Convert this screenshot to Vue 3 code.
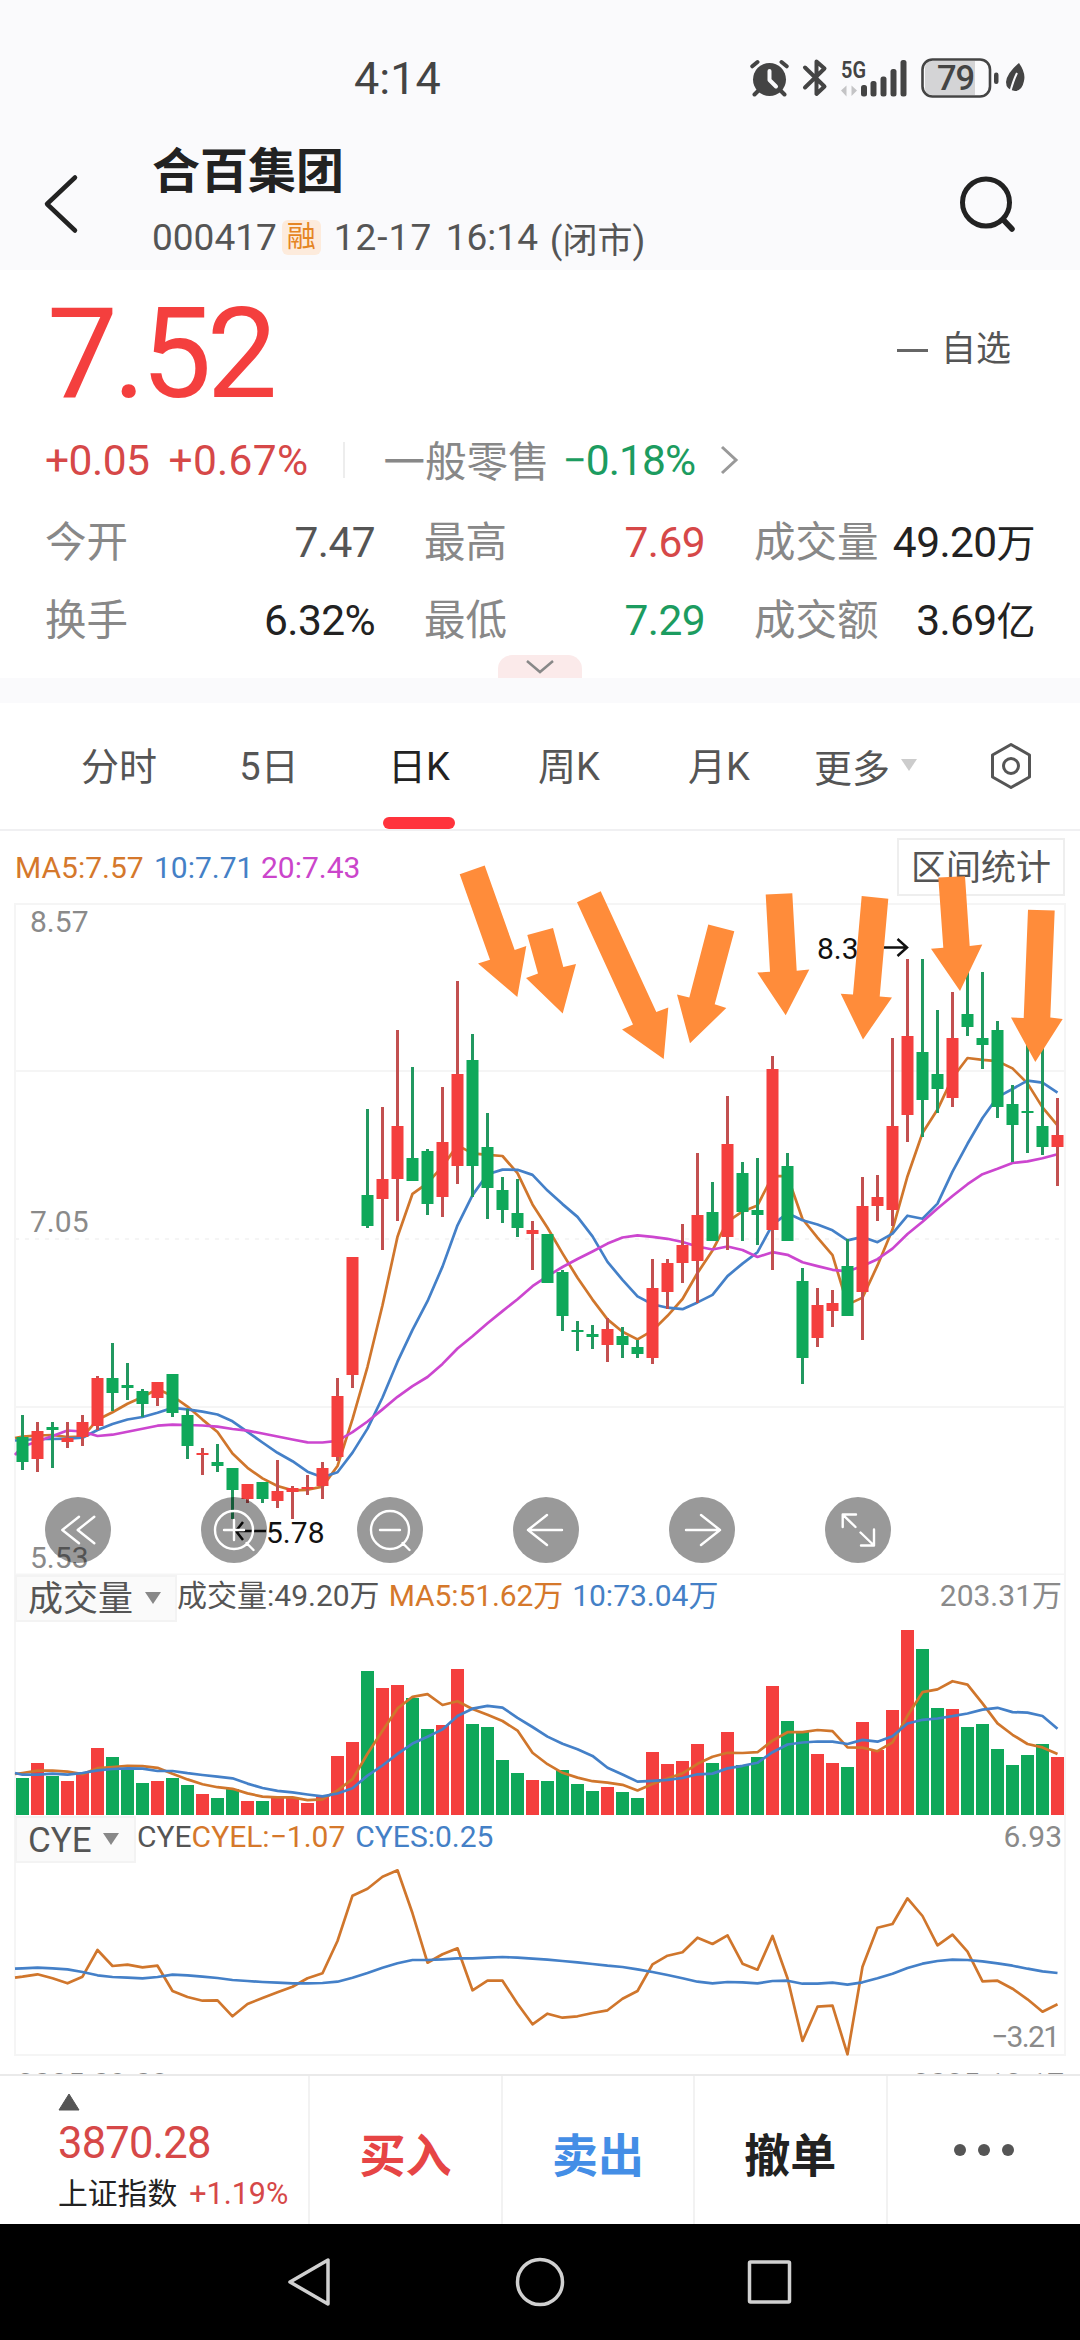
<script setup>
const stats = [
  [['今开', '7.47', 'dim'], ['最高', '7.69', 'up'], ['成交量', '49.20', '', '万']],
  [['换手', '6.32%', ''], ['最低', '7.29', 'down'], ['成交额', '3.69', '', '亿']],
]
const tabs = ['分时', '5日', '日K', '周K', '月K']

// direction, high, body top, body bottom, low, volume top
const candles = `G 1415 1437 1462 1470 1778
R 1422 1431 1459 1472 1763
G 1422 1427 1430 1468 1776
R 1422 1438 1442 1448 1781
R 1415 1422 1437 1446 1773
R 1376 1378 1426 1430 1748
G 1343 1378 1393 1411 1757
G 1363 1385 1388 1400 1770
G 1389 1391 1404 1417 1783
R 1382 1382 1398 1406 1781
G 1374 1374 1413 1417 1778
G 1409 1415 1446 1459 1785
R 1448 1453 1455 1475 1794
G 1444 1462 1466 1472 1798
G 1468 1468 1490 1519 1789
R 1484 1484 1499 1503 1801
G 1482 1482 1499 1503 1801
R 1460 1491 1501 1508 1798
R 1486 1488 1492 1519 1798
R 1475 1487 1489 1495 1803
R 1462 1468 1486 1499 1797
R 1378 1396 1457 1461 1756
R 1257 1257 1375 1388 1742
G 1109 1195 1226 1228 1671
R 1107 1179 1199 1250 1688
R 1030 1126 1179 1221 1685
G 1067 1158 1181 1181 1698
G 1149 1151 1204 1215 1729
R 1087 1142 1197 1217 1725
R 981 1074 1166 1184 1669
G 1034 1060 1166 1197 1724
G 1113 1147 1188 1219 1727
G 1177 1190 1210 1223 1760
G 1179 1213 1228 1237 1773
R 1221 1230 1234 1270 1780
G 1234 1234 1283 1283 1781
G 1270 1272 1316 1331 1770
G 1321 1330 1332 1351 1784
G 1325 1334 1337 1349 1791
R 1318 1329 1345 1362 1787
G 1327 1336 1345 1358 1792
G 1340 1347 1354 1358 1798
R 1259 1288 1358 1364 1752
R 1259 1263 1292 1309 1764
R 1224 1245 1263 1283 1761
R 1153 1215 1261 1303 1744
G 1182 1212 1241 1241 1763
R 1096 1144 1237 1250 1732
G 1162 1173 1212 1241 1765
G 1158 1210 1215 1245 1757
R 1056 1069 1230 1270 1686
G 1153 1166 1241 1241 1721
G 1268 1281 1358 1384 1732
R 1288 1305 1338 1347 1754
R 1290 1303 1311 1327 1763
G 1239 1266 1316 1316 1767
R 1177 1206 1292 1340 1722
R 1175 1197 1206 1221 1750
R 1038 1126 1210 1226 1710
R 959 1036 1115 1142 1630
G 959 1052 1100 1137 1649
G 1010 1074 1089 1113 1708
R 992 1038 1098 1107 1709
G 956 1014 1027 1036 1727
G 972 1038 1045 1069 1724
G 1021 1030 1107 1118 1749
G 1085 1104 1125 1162 1765
G 1043 1111 1113 1153 1755
G 1043 1126 1147 1155 1744
R 1098 1135 1147 1186 1757`.split('\n').map((row, i) => {
  const [dir, ...n] = row.split(' ')
  const [high, top, bottom, low, vol] = n.map(Number)
  return { x: 22.5 + i * 15, kind: dir === 'R' ? 'rise' : 'fall', high, top, bottom, low, vol, close: dir === 'R' ? top : bottom }
})

const closes = candles.map((c) => c.close)
const volumes = candles.map((c) => c.vol)

// First value sits on the left frame, the rest on candle centres
const toPoints = ([first, ...rest]) =>
  [`15,${first}`, ...rest.map((y, i) => `${22.5 + i * 15},${y.toFixed(1)}`)].join(' ')
const average = (values, span, lead) => {
  const tail = []
  for (let i = lead.length - 1; i < values.length; i++) {
    tail.push(values.slice(i - span + 1, i + 1).reduce((a, b) => a + b, 0) / span)
  }
  return toPoints([...lead, ...tail])
}

const ma5 = average(closes, 5, [1438, 1436.7, 1435.5, 1435, 1437])
const ma10 = average(closes, 10, [1440.5, 1440, 1439, 1439, 1438.7, 1437.7, 1430, 1424, 1419.5, 1417])
const ma20 = average(closes, 20, [1455, 1446.5, 1441.5, 1436, 1430.5, 1431.5, 1436, 1434.7, 1431.7, 1428.7, 1425.7, 1424.7, 1425, 1425.5, 1426.7, 1429, 1430.7, 1433.5, 1436.5, 1439.5])
const vol5 = average(volumes, 5, [1774, 1773, 1770.7, 1770.7, 1771.7])
const vol10 = average(volumes, 10, [1773, 1774.7, 1774.7, 1773.7, 1774.7, 1773, 1770.3, 1769, 1768.3, 1768.7])

const scaled = (list) => toPoints(list.map((v) => 1810 + v / 3))
const cyel = scaled([503, 500, 493, 505, 520, 500, 420, 468, 464, 472, 467, 543, 561, 572, 571, 619, 582, 564, 547, 530, 505, 490, 393, 257, 236, 200, 181, 310, 458, 433, 415, 541, 512, 512, 581, 643, 611, 623, 619, 609, 601, 566, 543, 463, 437, 427, 383, 402, 376, 461, 479, 378, 505, 693, 590, 587, 733, 470, 353, 342, 265, 318, 406, 374, 425, 514, 512, 536, 568, 605, 583])
const cyes = scaled([476, 475, 473, 475, 478, 486, 496, 501, 503, 505, 501, 494, 496, 500, 504, 510, 513, 516, 518, 520, 520, 519, 515, 503, 489, 473, 460, 450, 450, 448, 445, 445, 443, 441, 443, 446, 449, 453, 457, 462, 467, 471, 478, 486, 495, 505, 515, 520, 516, 517, 520, 513, 512, 521, 521, 518, 524, 517, 505, 491, 474, 461, 453, 449, 450, 454, 460, 467, 476, 484, 489])

const arrows = [
  '459.7,874.3 484.7,865.6 514.7,950 526.3,946 517.3,997 478,963.4 490,959.7',
  '527.3,935 553,928 563.3,967 576,963.9 562.7,1013.5 526,978 538,973.5',
  '577,902.3 600.7,891.3 656.3,1012 668.3,1007.5 663.7,1059 622,1029.5 633,1024.5',
  '708.3,924.4 734.3,931.3 714.7,1004.3 726.3,1008 690,1043.3 677,994.6 689.3,997.4',
  '765.7,894.5 792.3,893.2 796.7,970.8 809.3,969.4 785.7,1015.3 757.3,972.6 770,971.7',
  '861.7,896 888.3,898.7 879.7,996.5 892,997.4 863,1039.6 840.7,993.7 853,994.6',
  '938.3,877.5 965,876.2 969.7,946 982.3,944.6 960,991 931,948.7 943.3,947.8',
  '1028,909.7 1054.7,910.6 1050.3,1017.6 1062.7,1019 1035.3,1062 1011,1017.6 1023.7,1018',
]

const tools = [
  'M1-13.3-15.7 0 1 13.3M16.3-13.3-.3 0 16.3 13.3',
  'M-19 0a19 19 0 1 0 38 0a19 19 0 1 0-38 0M-10 0H10M0-10V10M12.5 13l7 7',
  'M-19 0a19 19 0 1 0 38 0a19 19 0 1 0-38 0M-10 0H10M12.5 13l7 7',
  'M16 0H-18M1-15-18 0 1 15',
  'M-16 0H18M-1-15 18 0-1 15',
  'M-15.3-3V-15.5H-2M-15-15.2-2.5-3M16-.5V15.5H3M15.5 15 2.5 2.5',
]
</script>

<template>
  <div class="screen">
    <div class="status">
      <span class="clock">4:14</span>
      <svg class="status-icons" width="290" height="50" viewBox="745 54 290 50">
        <g fill="#444">
          <circle cx="769.5" cy="79.500" r="16.500" />
          <path d="M758 91l-3.500 3.500M781 91l3.500 3.500M752.300 66.300 757.500 62M781.500 62l5.200 4.300" stroke="#444" stroke-width="4" stroke-linecap="round" fill="none" />
          <path d="M769.500 71v9l6.500 6.500" stroke="#fafafc" stroke-width="4" fill="none" stroke-linecap="round" stroke-linejoin="round" />
          <path d="M805 67.500l19.500 19-8 7.500V61.500l8 7-19.500 19" fill="none" stroke="#444" stroke-width="4" stroke-linejoin="round" stroke-linecap="round" />
          <rect x="861" y="85" width="6" height="11.500" rx="2.500" />
          <rect x="870.500" y="81" width="6" height="15.500" rx="2.500" />
          <rect x="880.500" y="76.500" width="6" height="20" rx="2.500" />
          <rect x="890.500" y="69" width="6" height="27.500" rx="2.500" />
          <rect x="900.500" y="60" width="6" height="36.500" rx="2.500" />
          <text x="841" y="77.500" font-size="24" font-weight="600" textLength="25" lengthAdjust="spacingAndGlyphs">5G</text>
          <path d="M841 90.500l5.500-5v11zM857 90.500l-5.500 5.500V85.500z" fill="#c4c4c6" />
          <path d="M932 61h43v34h-43q-7 0-7-7V68q0-7 7-7z" fill="#d4d4d6" />
          <rect x="922.500" y="59.500" width="67.500" height="37" rx="10" fill="none" stroke="#444" stroke-width="2.600" />
          <rect x="994" y="72.500" width="4.500" height="11.500" rx="2.200" />
          <text x="937" y="90" font-size="34.500" font-weight="500" textLength="38">79</text>
          <path d="M1019 63q7 10 5 18-2 10-9 10-9-1-9-9 1-9 13-19z" />
          <path d="M1017 73q-4 8-7 20" stroke="#fafafc" stroke-width="2" fill="none" />
        </g>
      </svg>
    </div>

    <header class="header">
      <svg class="back" width="40" height="70" viewBox="40 169 40 70"><path d="M75 177.500 47 204 75 230.500" fill="none" stroke="#222" stroke-width="4.500" stroke-linecap="round" stroke-linejoin="round" /></svg>
      <div class="title">
        <h1>合百集团</h1>
        <div class="sub">
          <span>000417</span><b class="badge">融</b><span class="date">12-17</span><span class="time">16:14</span><span class="closed">(<i>闭市</i>)</span>
        </div>
      </div>
      <svg class="search" width="60" height="60" viewBox="957 173 60 60"><circle cx="986" cy="202.500" r="23.500" fill="none" stroke="#222" stroke-width="5" /><path d="M1003.500 220l8.500 9" stroke="#222" stroke-width="5.500" stroke-linecap="round" /></svg>
    </header>

    <section class="quote">
      <div class="price-row">
        <span class="price">7.52</span>
        <span class="watch"><i class="dash"></i>自选</span>
      </div>
      <div class="change-row">
        <span class="up">+0.05</span><span class="up pct">+0.67%</span><i class="bar"></i>
        <span class="sector">一般零售</span><span class="down">−0.18%</span>
        <svg width="20" height="30" viewBox="0 0 20 30"><path d="M3 2 17 15 3 28" fill="none" stroke="#999" stroke-width="3" /></svg>
      </div>
      <div v-for="(row, r) in stats" :key="r" class="stat-row">
        <div v-for="s in row" :key="s[0]" class="stat">
          <span class="label">{{ s[0] }}</span><span class="value" :class="s[2]">{{ s[1] }}<i v-if="s[3]">{{ s[3] }}</i></span>
        </div>
      </div>
      <div class="expand"><svg width="30" height="16" viewBox="0 0 30 16"><path d="M2 2 15 13 28 2" fill="none" stroke="#888" stroke-width="2.500" /></svg></div>
    </section>

    <nav class="tabs">
      <span v-for="t in tabs" :key="t" class="tab" :class="{ active: t === '日K' }">{{ t }}</span>
      <span class="more">更多<i class="tri light"></i></span>
      <svg width="44" height="48" viewBox="-22 -24 44 48" fill="none" stroke="#555" stroke-width="3"><path d="M0-21.500 18.500-11V11L0 21.500-18.500 11V-11z" stroke-linejoin="round" /><circle r="7.500" /></svg>
    </nav>

    <section class="chart">
      <div class="legend-row">
        <span class="c-orange first">MA5:7.57</span><span class="c-blue second">10:7.71</span><span class="c-pink">20:7.43</span>
        <span class="range">区间统计</span>
      </div>

      <div class="pane kline">
        <svg width="1080" height="672" viewBox="0 903 1080 672">
          <g class="grid">
            <path d="M15 904H1065M15 1071H1065M15 1407H1065M15 1574.500H1065M15 903V1575M1065 903V1575" />
            <path d="M15 1239H1065" stroke-dasharray="4 6" />
          </g>
          <polyline class="l-orange" :points="ma5" />
          <polyline class="l-blue" :points="ma10" />
          <polyline class="l-pink" :points="ma20" />
          <g v-for="c in candles" :key="c.x" :class="c.kind">
            <rect class="wick" :x="c.x - 1.5" :y="c.high" width="3" :height="c.low - c.high" />
            <rect :x="c.x - 6" :y="c.top" width="12" :height="c.bottom - c.top" />
          </g>
          <g class="axis"><text x="30" y="932">8.57</text><text x="30" y="1232">7.05</text><text x="30" y="1568">5.53</text></g>
          <g class="mark">
            <text x="817" y="958.500">8.37</text><text x="266" y="1543">5.78</text>
            <path d="M878 947.500H907M897.500 939 907 947.500 897.500 956" />
            <path d="M266 1531H237M243 1522 236 1531 243 1540" stroke-width="3.500" />
          </g>
        </svg>
        <div class="tools">
          <span v-for="(d, i) in tools" :key="i" class="tool"><svg width="66" height="66" viewBox="-33 -33 66 66"><path :d="d" /></svg></span>
        </div>
      </div>

      <div class="pane volume">
        <svg width="1080" height="241" viewBox="0 1575 1080 241">
          <g class="grid"><path d="M15 1575V1816M1065 1575V1816" /></g>
          <g v-for="c in candles" :key="c.x" :class="c.kind"><rect :x="c.x - 6.5" :y="c.vol" width="13" :height="1815 - c.vol" /></g>
          <polyline class="l-orange" :points="vol5" />
          <polyline class="l-blue" :points="vol10" />
        </svg>
        <div class="pane-head">
          <span class="tag vol-tag">成交量<i class="tri"></i></span>
          <span class="c-gray vl">成交量:49.20万</span><span class="c-orange">MA5:51.62万</span><span class="c-blue">10:73.04万</span>
          <span class="max">203.31万</span>
        </div>
      </div>

      <div class="pane cye">
        <svg width="1080" height="241" viewBox="0 1816 1080 241">
          <g class="grid"><path d="M15 1816V2055H1065V1816" /></g>
          <polyline class="l-orange" :points="cyel" />
          <polyline class="l-blue" :points="cyes" />
          <g class="axis"><text x="1060" y="2047" text-anchor="end" textLength="69">−3.21</text></g>
        </svg>
        <div class="pane-head">
          <span class="tag cye-tag">CYE<i class="tri"></i></span>
          <span class="c-gray">CYE</span><span class="c-orange cl">CYEL:−1.07</span><span class="c-blue">CYES:0.25</span>
          <span class="max">6.93</span>
        </div>
      </div>

      <div class="dates"><span>2025-09-03</span><span>2025-12-17</span></div>

      <svg class="arrows" width="1080" height="244" viewBox="0 831 1080 244"><polygon v-for="a in arrows" :key="a" :points="a" fill="#ff8c3a" /></svg>
    </section>

    <footer class="footer">
      <div class="index">
        <svg width="22" height="18" viewBox="0 0 22 18"><path d="M11 1 21 17H1z" fill="#555" stroke="#555" stroke-linejoin="round" /></svg>
        <span class="points">3870.28</span>
        <span class="index-name">上证指数<em>+1.19%</em></span>
      </div>
      <div class="act buy">买入</div>
      <div class="act sell">卖出</div>
      <div class="act">撤单</div>
      <div class="act dots"><i></i><i></i><i></i></div>
    </footer>

    <div class="sysnav">
      <svg width="1080" height="116" viewBox="0 2224 1080 116" fill="none" stroke="#d0d0d0" stroke-width="3.500" stroke-linejoin="round">
        <path d="M328 2260V2304L290 2282z" /><circle cx="540" cy="2282" r="22.500" /><rect x="749.500" y="2262" width="40" height="40" rx="1" />
      </svg>
    </div>
  </div>
</template>

<style>
body { background: #fff; }
</style>

<style scoped>
.screen { width: 1080px; height: 2340px; overflow: hidden; display: flex; flex-direction: column; background: #fff; font-family: Roboto, "Noto Sans CJK SC", sans-serif; color: #222; }
.screen > * { flex: none; box-sizing: border-box; }
i, em { font-style: normal; }
svg { display: block; }

.status { height: 140px; background: #fafafc; display: flex; padding: 54px 45px 0 354px; justify-content: space-between; }
.clock { font-size: 45px; line-height: 50px; color: #444; }

.header { height: 130px; background: #fafafc; display: flex; }
.back { margin: 29px 72px 0 40px; }
.title { flex: 1; }
h1 { margin: 0; font-size: 48px; line-height: 60px; padding-top: 2px; font-weight: 700; color: #222; }
.sub { display: flex; align-items: center; height: 70px; font-size: 37px; color: #555; }
.badge { width: 39px; height: 35px; line-height: 34px; margin: 0 13px 0 5px; border-radius: 6px; background: #fdebdc; color: #e58524; font-size: 29px; font-weight: 400; text-align: center; }
.date { width: 112px; letter-spacing: 1px; }
.time { width: 104px; }
.closed i { font-size: 35px; }
.search { margin: 33px 63px 0 0; }

.quote { height: 408px; position: relative; }
.price-row { height: 154px; display: flex; align-items: center; justify-content: space-between; padding: 8px 69px 0 47px; box-sizing: border-box; }
.price { font-size: 126px; line-height: 150px; color: #f43f3e; letter-spacing: -5px; padding-top: 6px; }
.watch { display: flex; align-items: center; gap: 13px; font-size: 35px; line-height: 44px; color: #555; padding-bottom: 2px; }
.dash { width: 31px; height: 3px; background: #666; }
.change-row { height: 78px; margin-top: -3px; padding: 0 0 2px 45px; display: flex; align-items: center; font-size: 42.5px; letter-spacing: -0.5px; }
.up { color: #d64848; }
.down { color: #1c9c60; }
.change-row .down { letter-spacing: -0.9px; }
.pct { margin-left: 19px; letter-spacing: 0.3px; }
.bar { width: 2px; height: 36px; margin: 0 38px 0 35px; background: #ededed; }
.sector { font-size: 41.5px; letter-spacing: 0; color: #888; margin: -3px 13px 0 0; }
.change-row svg { margin: 0 0 0 24px; }
.stat-row { height: 78px; padding: 5px 45px 0 45px; box-sizing: border-box; display: grid; grid-template-columns: 330px 281px 281px; column-gap: 49px; align-items: center; }
.stat { display: flex; justify-content: space-between; align-items: baseline; }
.label { font-size: 41.5px; line-height: 60px; color: #888; }
.value { font-size: 42.5px; letter-spacing: -0.6px; }
.value i { font-size: 39px; }
.value.dim { color: #555; }
.value.up { color: #d64848; }
.value.down { color: #1c9c60; }
.expand { position: absolute; left: 498px; bottom: 0; width: 84px; height: 23px; border-radius: 14px 14px 0 0; background: #fbeaea; display: flex; justify-content: center; align-items: center; }

.tabs { height: 153px; border-top: 25px solid #fafafc; border-bottom: 2px solid #f0f0f2; display: flex; align-items: center; padding-left: 44px; font-size: 38px; color: #555; }
.tab { width: 150px; height: 126px; line-height: 129px; text-align: center; display: flex; flex-direction: column; align-items: center; }
.tab.active { color: #222; }
.tab.active::after { content: ""; width: 72px; height: 12px; border-radius: 6px; background: #ff333c; margin-top: -15px; }
.more { display: flex; align-items: center; margin: 0 72px 2px 20px; gap: 11px; }
.tabs svg { flex: none; }
.tri { flex: none; border: 8.5px solid transparent; border-top: 12px solid #888; border-bottom: 0; }
.tri.light { border-top-color: #ccc; }

.chart { height: 1243px; position: relative; overflow: hidden; font-size: 30px; }
.c-orange { color: #d5782b; }
.c-blue { color: #4480c6; }
.c-pink { color: #cb45cb; }
.c-gray { color: #555; }
.legend-row { height: 72px; display: flex; align-items: center; padding-left: 15px; }
.first { width: 139px; font-size: 30px; }
.second { width: 107px; }
.range { margin: 0 15px 0 auto; width: 164px; height: 54px; border: 2px solid #eee; line-height: 58px; text-align: center; font-size: 35px; color: #555; }
.pane { display: grid; }
.pane > * { grid-area: 1 / 1; }
.kline { height: 672px; }
.volume, .cye { height: 241px; }
.grid { fill: none; stroke: #f5f5f5; stroke-width: 2; }
polyline { fill: none; stroke-width: 2.700; stroke-linejoin: round; }
.l-orange { stroke: #d0762c; }
.l-blue { stroke: #4480c8; }
.l-pink { stroke: #cc46cf; }
.rise { fill: #f43f3e; }
.fall { fill: #0fa85a; }
.rise .wick { fill: #c25050; }
.fall .wick { fill: #229860; }
.axis { fill: #8a8a8a; font-size: 30px; }
.mark { fill: #111; font-size: 30px; }
.mark path { fill: none; stroke: #111; stroke-width: 2.500; }
.tools { align-self: start; display: flex; gap: 90px; padding: 594px 0 0 45px; }
.tool { width: 66px; height: 66px; border-radius: 50%; background: rgba(0, 0, 0, 0.4); }
.tool path { fill: none; stroke: #fff; stroke-width: 2.400; stroke-linejoin: round; stroke-linecap: round; }
.pane-head { align-self: start; display: flex; height: 47px; padding: 0 18px 0 15px; }
.pane-head > span { line-height: 42px; white-space: pre; }
.pane-head > .tag { box-sizing: border-box; height: 47px; line-height: 48px; border: 2px solid #f3f3f3; background: #fafafa; color: #555; font-size: 35px; display: flex; align-items: center; padding: 3px 0 0 11px; }
.tag .tri { margin-bottom: 4px; }
.vol-tag { width: 162px; gap: 12px; }
.cye-tag { width: 121px; gap: 11px; margin-right: 1px; }
.vl { margin-right: 9px; }
.cl { margin-right: 10px; }
.volume .c-orange { margin-right: 9px; letter-spacing: -0.1px; }
.max { margin-left: auto; color: #8a8a8a; }
.dates { display: flex; justify-content: space-between; padding: 9px 16px 0 17px; color: #888; line-height: 36px; }
.arrows { position: absolute; left: 0; top: 0; }

.footer { height: 150px; border-top: 2px solid #eaeaea; display: flex; background: #fff; }
.index { width: 311px; padding: 17px 0 0 58px; box-sizing: border-box; border-right: 2px solid #f2f2f2; display: flex; flex-direction: column; }
.points { font-size: 43.500px; line-height: 52px; margin-top: 7px; letter-spacing: -0.8px; color: #d64848; }
.index-name { font-size: 29.800px; line-height: 34px; margin-top: 7px; white-space: nowrap; }
.index-name em { margin-left: 12px; color: #d64848; font-size: 30.500px; }
.act { width: 193px; box-sizing: border-box; border-right: 2px solid #f2f2f2; display: flex; align-items: center; justify-content: center; font-size: 46px; font-weight: 700; padding-top: 3px; }
.buy { color: #e64545; }
.sell { color: #448ee6; }
.dots { border: 0; gap: 12px; padding-top: 0; }
.dots i { width: 12px; height: 12px; border-radius: 50%; background: #555; }
.sysnav { height: 116px; background: #000; }
</style>
